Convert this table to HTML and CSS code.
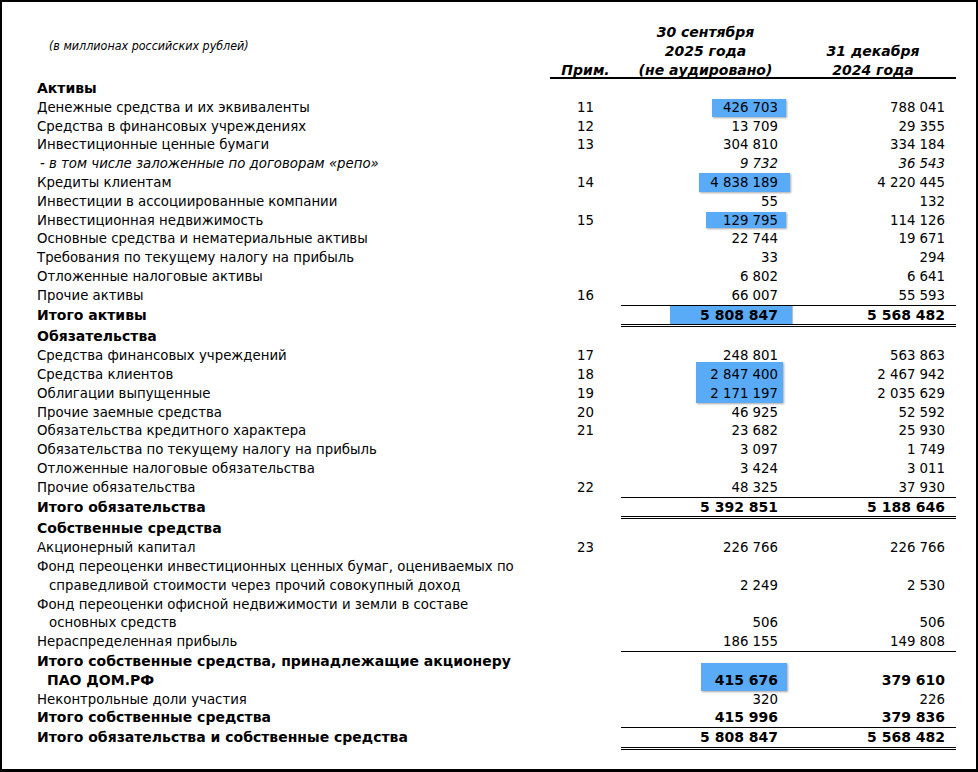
FILE: index.html
```html
<!DOCTYPE html>
<html lang="ru">
<head>
<meta charset="utf-8">
<title>Баланс</title>
<link rel="stylesheet" href="styles.css">
</head>
<body>
<div class="frame">
  <div class="sheet">
    <div class="row head">
      <div class="c-label"><span class="units">(в миллионах российских рублей)</span></div>
      <div class="c-note">Прим.</div>
      <div class="c-v1">30 сентября<br>2025 года<br>(не аудировано)</div>
      <div class="c-v2">31 декабря<br>2024 года</div>
    </div>

    <div class="row sec"><div class="c-label">Активы</div><div class="c-note"></div><div class="c-v1"></div><div class="c-v2"></div></div>
    <div class="row"><div class="c-label">Денежные средства и их эквиваленты</div><div class="c-note">11</div><div class="c-v1"><span class="hl hl-a"></span><span class="num">426 703</span></div><div class="c-v2">788 041</div></div>
    <div class="row"><div class="c-label">Средства в финансовых учреждениях</div><div class="c-note">12</div><div class="c-v1">13 709</div><div class="c-v2">29 355</div></div>
    <div class="row"><div class="c-label">Инвестиционные ценные бумаги</div><div class="c-note">13</div><div class="c-v1">304 810</div><div class="c-v2">334 184</div></div>
    <div class="row sub"><div class="c-label">- в том числе заложенные по договорам «репо»</div><div class="c-note"></div><div class="c-v1">9 732</div><div class="c-v2">36 543</div></div>
    <div class="row"><div class="c-label">Кредиты клиентам</div><div class="c-note">14</div><div class="c-v1"><span class="hl hl-b"></span><span class="num">4 838 189</span></div><div class="c-v2">4 220 445</div></div>
    <div class="row"><div class="c-label">Инвестиции в ассоциированные компании</div><div class="c-note"></div><div class="c-v1">55</div><div class="c-v2">132</div></div>
    <div class="row"><div class="c-label">Инвестиционная недвижимость</div><div class="c-note">15</div><div class="c-v1"><span class="hl hl-c"></span><span class="num">129 795</span></div><div class="c-v2">114 126</div></div>
    <div class="row"><div class="c-label">Основные средства и нематериальные активы</div><div class="c-note"></div><div class="c-v1">22 744</div><div class="c-v2">19 671</div></div>
    <div class="row"><div class="c-label">Требования по текущему налогу на прибыль</div><div class="c-note"></div><div class="c-v1">33</div><div class="c-v2">294</div></div>
    <div class="row"><div class="c-label">Отложенные налоговые активы</div><div class="c-note"></div><div class="c-v1">6 802</div><div class="c-v2">6 641</div></div>
    <div class="row"><div class="c-label">Прочие активы</div><div class="c-note">16</div><div class="c-v1">66 007</div><div class="c-v2">55 593</div></div>
    <div class="row total ruled dbl"><div class="c-label">Итого активы</div><div class="c-note"></div><div class="c-v1"><span class="hl hl-d"></span><span class="num">5 808 847</span></div><div class="c-v2">5 568 482</div></div>

    <div class="row sec"><div class="c-label">Обязательства</div><div class="c-note"></div><div class="c-v1"></div><div class="c-v2"></div></div>
    <div class="row"><div class="c-label">Средства финансовых учреждений</div><div class="c-note">17</div><div class="c-v1">248 801</div><div class="c-v2">563 863</div></div>
    <div class="row"><div class="c-label">Средства клиентов</div><div class="c-note">18</div><div class="c-v1"><span class="hl hl-e"></span><span class="num">2 847 400</span></div><div class="c-v2">2 467 942</div></div>
    <div class="row"><div class="c-label">Облигации выпущенные</div><div class="c-note">19</div><div class="c-v1"><span class="num">2 171 197</span></div><div class="c-v2">2 035 629</div></div>
    <div class="row"><div class="c-label">Прочие заемные средства</div><div class="c-note">20</div><div class="c-v1">46 925</div><div class="c-v2">52 592</div></div>
    <div class="row"><div class="c-label">Обязательства кредитного характера</div><div class="c-note">21</div><div class="c-v1">23 682</div><div class="c-v2">25 930</div></div>
    <div class="row"><div class="c-label">Обязательства по текущему налогу на прибыль</div><div class="c-note"></div><div class="c-v1">3 097</div><div class="c-v2">1 749</div></div>
    <div class="row"><div class="c-label">Отложенные налоговые обязательства</div><div class="c-note"></div><div class="c-v1">3 424</div><div class="c-v2">3 011</div></div>
    <div class="row"><div class="c-label">Прочие обязательства</div><div class="c-note">22</div><div class="c-v1">48 325</div><div class="c-v2">37 930</div></div>
    <div class="row total ruled dbl"><div class="c-label">Итого обязательства</div><div class="c-note"></div><div class="c-v1">5 392 851</div><div class="c-v2">5 188 646</div></div>

    <div class="row sec"><div class="c-label">Собственные средства</div><div class="c-note"></div><div class="c-v1"></div><div class="c-v2"></div></div>
    <div class="row"><div class="c-label">Акционерный капитал</div><div class="c-note">23</div><div class="c-v1">226 766</div><div class="c-v2">226 766</div></div>
    <div class="row"><div class="c-label">Фонд переоценки инвестиционных ценных бумаг, оцениваемых по<br><span class="cont">справедливой стоимости через прочий совокупный доход</span></div><div class="c-note"></div><div class="c-v1">2 249</div><div class="c-v2">2 530</div></div>
    <div class="row"><div class="c-label">Фонд переоценки офисной недвижимости и земли в составе<br><span class="cont">основных средств</span></div><div class="c-note"></div><div class="c-v1">506</div><div class="c-v2">506</div></div>
    <div class="row"><div class="c-label">Нераспределенная прибыль</div><div class="c-note"></div><div class="c-v1">186 155</div><div class="c-v2">149 808</div></div>
    <div class="row total ruled"><div class="c-label">Итого собственные средства, принадлежащие акционеру<br><span class="cont">ПАО ДОМ.РФ</span></div><div class="c-note"></div><div class="c-v1"><span class="hl hl-f"></span><span class="num">415 676</span></div><div class="c-v2">379 610</div></div>
    <div class="row"><div class="c-label">Неконтрольные доли участия</div><div class="c-note"></div><div class="c-v1">320</div><div class="c-v2">226</div></div>
    <div class="row total"><div class="c-label">Итого собственные средства</div><div class="c-note"></div><div class="c-v1">415 996</div><div class="c-v2">379 836</div></div>
    <div class="row total ruled dbl"><div class="c-label">Итого обязательства и собственные средства</div><div class="c-note"></div><div class="c-v1">5 808 847</div><div class="c-v2">5 568 482</div></div>
  </div>
</div>
</body>
</html>
```

FILE: styles.css
```css
* { box-sizing: border-box; }
html, body { margin: 0; padding: 0; background: #fff; }
body {
  font-family: "DejaVu Sans Condensed", "DejaVu Sans", sans-serif;
  font-stretch: condensed;
  font-size: 14.8px;
  color: #000;
}
.frame {
  width: 978px;
  height: 772px;
  border: 2px solid #000;
  border-bottom-width: 3px;
  padding: 20px 20px 0 35px;
  overflow: hidden;
}
.sheet { display: flex; flex-direction: column; }
.row {
  display: grid;
  grid-template-columns: 513px 71px 169px 166px;
  line-height: 18.8px;
  align-items: end;
}
.c-label { white-space: nowrap; }
.c-note { text-align: center; }
.c-v1 { text-align: right; padding-right: 12px; position: relative; }
.c-v2 { text-align: right; padding-right: 11px; }

.head {
  line-height: 19px;
  font-family: "DejaVu Sans", sans-serif;
  font-stretch: normal;
  font-size: 14px;
  font-weight: bold;
  font-style: italic;
  align-items: start;
}
.head .c-note, .head .c-v1, .head .c-v2 {
  height: 57px;
  border-bottom: 2px solid #000;
}
.head .c-v1 { padding-top: 0.5px; }
.head .c-v2 { padding-top: 19.5px; }
.head .c-note { padding-top: 38.5px; }
.head .c-v1, .head .c-v2 { text-align: center; padding-right: 0; }
.units {
  display: block;
  font-family: "DejaVu Sans Condensed", "DejaVu Sans", sans-serif;
  font-stretch: condensed;
  font-size: 12.4px;
  line-height: 15px;
  font-weight: normal;
  padding: 16px 0 0 12px;
}

.sec, .total {
  font-family: "DejaVu Sans", sans-serif;
  font-stretch: normal;
  font-size: 14px;
  font-weight: bold;
}
.sub { font-style: italic; }
.sub .c-label { padding-left: 3px; }
.cont { padding-left: 12px; }
.total .cont { padding-left: 10px; }

.ruled > div { border-top: 1px solid transparent; }
.ruled .c-v1, .ruled .c-v2 {
  border-top-color: #000;
  align-self: stretch;
  display: flex;
  flex-direction: column;
  justify-content: flex-end;
  align-items: flex-end;
}
.dbl > div { border-bottom: 3px double transparent; }
.dbl .c-v1, .dbl .c-v2 { border-bottom-color: #000; }

.num { position: relative; z-index: 1; }
.hl {
  position: absolute;
  background: #5aabf7;
  box-shadow: 1px 1px 2px rgba(0, 0, 0, 0.35);
  z-index: 0;
}
.hl-a { left: 91px; width: 74px; top: 1px; bottom: 0; }
.hl-b { left: 78px; width: 91px; top: 0; bottom: 0; }
.hl-c { left: 85px; width: 80px; top: 1px; bottom: 1px; }
.hl-d { left: 49px; width: 122px; top: 0; bottom: 0; box-shadow: 1px 0 1px rgba(0, 0, 0, 0.25); }
.hl-e { left: 75px; width: 87px; top: -3px; height: 41px; }
.hl-f { left: 80px; width: 86px; top: 11px; height: 28px; }
```
